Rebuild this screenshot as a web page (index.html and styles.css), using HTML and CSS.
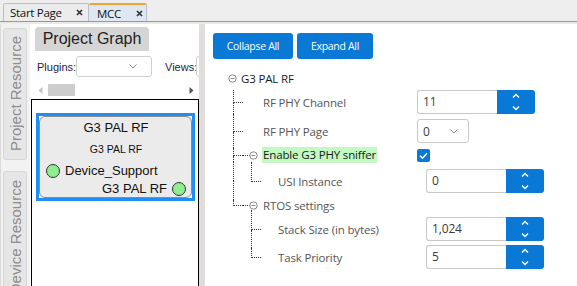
FILE: index.html
```html
<!DOCTYPE html>
<html>
<head>
<meta charset="utf-8">
<link rel="stylesheet" href="styles.css">
</head>
<body>
<div class="app">
  <div class="tabbar">
    <div class="tab start"><span class="tlabel">Start Page</span><svg class="tclose" width="7" height="7" viewBox="0 0 7 7"><path d="M1 1L6 6M6 1L1 6" stroke="#333" stroke-width="1.7"/></svg></div>
    <div class="tab active"><span class="tlabel">MCC</span><svg class="tclose" width="7" height="7" viewBox="0 0 7 7"><path d="M1 1L6 6M6 1L1 6" stroke="#333" stroke-width="1.7"/></svg></div>
  </div>
  <div class="tabline"></div>
  <div class="main">
    <div class="sidetabs">
      <div class="vtab"><span>Project Resource</span></div>
      <div class="vtab"><span>Device Resource</span></div>
    </div>
    <div class="leftpane">
      <div class="pgbtn">Project Graph</div>
      <div class="pluginrow">
        <span class="plabel">Plugins:</span>
        <div class="combo"><svg width="8" height="5" viewBox="0 0 8 5"><path d="M0.5 0.5L4 4L7.5 0.5" fill="none" stroke="#8a8a8a" stroke-width="1"/></svg></div>
        <span class="plabel views">Views:</span>
        <div class="combo"></div>
      </div>
      <div class="hscroll">
        <svg class="arr" width="5" height="7" viewBox="0 0 5 7"><path d="M4.5 0L0.5 3.5L4.5 7Z" fill="#c4c4c4"/></svg>
        <span class="thumb"></span>
        <svg class="arr right" width="5" height="7" viewBox="0 0 5 7"><path d="M0.5 0L4.5 3.5L0.5 7Z" fill="#555"/></svg>
      </div>
      <div class="canvas">
        <div class="node">
          <div class="nodeinner">
            <div class="ntitle">G3 PAL RF</div>
            <div class="nsub">G3 PAL RF</div>
            <div class="nport"><span class="dot"></span><span>Device_Support</span></div>
            <div class="nport out"><span>G3 PAL RF</span><span class="dot"></span></div>
          </div>
        </div>
      </div>
    </div>
    <div class="divider"></div>
    <div class="rightpane">
      <div class="btnrow">
        <div class="btn collapse">Collapse All</div>
        <div class="btn expand">Expand All</div>
      </div>
      <div class="tree">
        <div class="row r-root">
          <svg class="exp" width="9" height="9" viewBox="0 0 9 9"><circle cx="4.5" cy="4.5" r="3.7" fill="none" stroke="#7a7a7a" stroke-width="0.9"/><path d="M2.6 4.5H6.4" stroke="#7a7a7a" stroke-width="0.9"/></svg>
          <span class="rootlabel">G3 PAL RF</span>
        </div>
        <div class="row r-ch">
          <span class="cell tee"><i></i><i></i></span><span class="cell"></span>
          <span class="label">RF PHY Channel</span>
          <div class="ctl">
            <div class="spin"><div class="inp">11</div><div class="sbtn"><svg width="38" height="24" viewBox="0 0 38 24"><path d="M16 7.5L19 4.5L22 7.5M16 16.5L19 19.5L22 16.5" fill="none" stroke="#fff" stroke-width="1.3"/></svg></div></div>
          </div>
        </div>
        <div class="row r-pg">
          <span class="cell tee"><i></i><i></i></span><span class="cell"></span>
          <span class="label">RF PHY Page</span>
          <div class="ctl">
            <div class="select"><span>0</span><svg width="8" height="5" viewBox="0 0 8 5"><path d="M0.5 0.5L4 4L7.5 0.5" fill="none" stroke="#8a8a8a" stroke-width="1"/></svg></div>
          </div>
        </div>
        <div class="row r-en">
          <span class="cell tee"><i></i><i></i></span>
          <svg class="expc" width="18" height="9" viewBox="0 0 18 9"><path d="M0 4.5H1M2 4.5H3M4 4.5H5M6 4.5H6.6" stroke="#333" stroke-width="1"/><circle cx="10.5" cy="4.5" r="3.7" fill="none" stroke="#7a7a7a" stroke-width="0.9"/><path d="M8.6 4.5H12.4" stroke="#7a7a7a" stroke-width="0.9"/></svg>
          <span class="label hl">Enable G3 PHY sniffer</span>
          <div class="ctl">
            <div class="check"><svg width="13" height="13" viewBox="0 0 13 13"><path d="M3 6.8L5.5 9.2L10 4.2" fill="none" stroke="#fff" stroke-width="1.5"/></svg></div>
          </div>
        </div>
        <div class="row r-usi">
          <span class="cell pipe"><i></i><i></i></span><span class="cell elbow"><i></i><i></i></span>
          <span class="label sublabel">USI Instance</span>
          <div class="ctl sub">
            <div class="spin"><div class="inp">0</div><div class="sbtn"><svg width="38" height="24" viewBox="0 0 38 24"><path d="M16 7.5L19 4.5L22 7.5M16 16.5L19 19.5L22 16.5" fill="none" stroke="#fff" stroke-width="1.3"/></svg></div></div>
          </div>
        </div>
        <div class="row r-rtos">
          <span class="cell elbow"><i></i><i></i></span>
          <svg class="expc" width="18" height="9" viewBox="0 0 18 9"><path d="M0 4.5H1M2 4.5H3M4 4.5H5M6 4.5H6.6" stroke="#333" stroke-width="1"/><circle cx="10.5" cy="4.5" r="3.7" fill="none" stroke="#7a7a7a" stroke-width="0.9"/><path d="M8.6 4.5H12.4" stroke="#7a7a7a" stroke-width="0.9"/></svg>
          <span class="label">RTOS settings</span>
        </div>
        <div class="row r-stack">
          <span class="cell"></span><span class="cell tee"><i></i><i></i></span>
          <span class="label sublabel">Stack Size (in bytes)</span>
          <div class="ctl sub">
            <div class="spin"><div class="inp">1,024</div><div class="sbtn"><svg width="38" height="24" viewBox="0 0 38 24"><path d="M16 7.5L19 4.5L22 7.5M16 16.5L19 19.5L22 16.5" fill="none" stroke="#fff" stroke-width="1.3"/></svg></div></div>
          </div>
        </div>
        <div class="row r-task">
          <span class="cell"></span><span class="cell elbow"><i></i><i></i></span>
          <span class="label sublabel">Task Priority</span>
          <div class="ctl sub">
            <div class="spin"><div class="inp">5</div><div class="sbtn"><svg width="38" height="24" viewBox="0 0 38 24"><path d="M16 7.5L19 4.5L22 7.5M16 16.5L19 19.5L22 16.5" fill="none" stroke="#fff" stroke-width="1.3"/></svg></div></div>
          </div>
        </div>
      </div>
    </div>
  </div>
</div>
</body>
</html>
```

FILE: styles.css
```css
* { box-sizing: border-box; margin: 0; padding: 0; }
html, body { width: 577px; height: 286px; overflow: hidden; background: #fff; }
body { font-family: "Open Sans", "Noto Sans", sans-serif; color: #333; }

.app { width: 577px; height: 286px; display: flex; flex-direction: column; }

/* top tab bar */
.tabbar { height: 21px; background: #eeeeee; display: flex; align-items: flex-end; padding-left: 3px; }
.tab { height: 18px; display: flex; align-items: center; justify-content: space-between;
  border: 1px solid #b4c0cc; border-bottom: none; border-radius: 2px 2px 0 0;
  background: #ececec; font-size: 11.5px; color: #111; }
.tab.start { width: 86px; padding: 0 5px 0 6px; }
.tab.active { width: 58px; padding: 0 3px 0 8px; background: #dfe7f3; border-top: 2px solid #f2a431; border-left: none; }
.tlabel { letter-spacing: -0.3px; }
.tabline { height: 3px; border-top: 1px solid #849db4; background: #ebebe5; }

.main { flex: 1; display: flex; min-height: 0; }

/* vertical side tabs */
.sidetabs { width: 30px; flex: none; background: #f2f2f2; border-left: 1px solid #dadada;
  padding: 4px 2px 0 2px; display: flex; flex-direction: column; gap: 11px; overflow: hidden; }
.vtab { flex: none; height: 132px; width: 24px; background: #e6e6e6; border: 1px solid #d6d6d6;
  border-radius: 3px; display: flex; align-items: center; justify-content: center; }
.vtab span { writing-mode: vertical-rl; transform: rotate(180deg); white-space: nowrap;
  font-family: "Liberation Sans", Arial, sans-serif; font-size: 15px; color: #8d8d8d; }

/* left pane */
.leftpane { width: 169px; flex: none; background: #fff; overflow: hidden; display: flex; flex-direction: column;
  font-family: "Liberation Sans", Arial, sans-serif; }
.pgbtn { flex: none; margin: 3px 0 0 5px; width: 114px; height: 24px; background: #d5d5d5;
  border-radius: 4px 4px 0 0; font-size: 16px; color: #222; display: flex; align-items: center; justify-content: center; }
.pluginrow { flex: none; margin-top: 5px; height: 21px; padding-left: 7px; display: flex; align-items: center; white-space: nowrap; }
.plabel { flex: none; font-size: 11px; color: #2a2140; width: 39px; }
.plabel.views { margin-left: 13px; width: 31px; }
.combo { flex: none; width: 76px; height: 21px; border: 1px solid #cfcfcf; border-radius: 3px;
  display: flex; align-items: center; padding-left: 52px; }
.hscroll { flex: none; margin-top: 5px; height: 16px; display: flex; align-items: center; padding-left: 8px; }
.thumb { width: 27px; height: 12px; background: #cdcdcd; margin-left: 5px; }
.arr.right { margin-left: 114px; }
.canvas { flex: 1; margin: 1px 0 0 1px; width: 168px; border: 1px solid #000; border-bottom: none; background: #fff; }
.node { margin: 13px 0 0 4px; width: 159px; height: 88px; border: 3px solid #1f8ff7; }
.nodeinner { height: 100%; background: #ebebeb; border: 1px solid #8a8a8a; border-radius: 6px;
  padding: 2px 5px 0 6px; color: #111; }
.ntitle { font-size: 13px; line-height: 18px; text-align: center; }
.nsub { font-size: 10.5px; line-height: 18px; margin-top: 3px; text-align: center; }
.nport { font-size: 13px; line-height: 18px; display: flex; align-items: center; gap: 5px; }
.nsub + .nport { margin-top: 4px; }
.nport.out { justify-content: flex-end; }
.dot { width: 14px; height: 14px; border-radius: 50%; background: #90ee90; border: 1px solid #333; flex: none; }

.divider { width: 6px; flex: none; background: #e1dddd; }

/* right pane */
.rightpane { flex: 1; background: #fff; padding: 9px 0 0 8px; display: flex; flex-direction: column; overflow: hidden; }
.btnrow { display: flex; gap: 4px; height: 26px; flex: none; }
.btn { height: 26px; background: #0a79d6; color: #fff; border-radius: 3px; font-size: 10.5px; letter-spacing: -0.3px;
  display: flex; align-items: center; justify-content: center; }
.btn.collapse { width: 80px; }
.btn.expand { width: 76px; }
.tree { margin: 7px 0 0 12px; display: flex; flex-direction: column; }
.row { display: flex; align-items: center; flex: none; font-size: 11.5px; letter-spacing: -0.15px; }
.r-root { height: 24px; padding-left: 3px; }
.r-ch { height: 24px; }
.r-pg { height: 34px; }
.r-en { height: 14px; }
.r-usi { height: 38px; }
.r-rtos { height: 10px; }
.r-stack { height: 38px; }
.r-task { height: 18px; }
.exp { flex: none; }
.rootlabel { margin-left: 4px; color: #1a1a1a; }
.expc { flex: none; }
.cell { flex: none; width: 18px; align-self: stretch; display: flex; flex-direction: column; }
.cell i { flex: 1; margin-left: 8px; display: block; }
.cell.tee i:first-child { border-left: 1px dotted #333; border-bottom: 1px dotted #333; }
.cell.tee i:last-child { border-left: 1px dotted #333; }
.cell.pipe i { border-left: 1px dotted #333; }
.cell.elbow i:first-child { border-left: 1px dotted #333; border-bottom: 1px dotted #333; }
.label { flex: 1; margin-left: 2px; color: #555; white-space: nowrap; }
.label.hl { flex: none; margin-left: 1px; padding: 0 1px; background: #c2f8c2; color: #1a1a1a; line-height: 16px; }
.r-en .ctl { margin-left: auto; }
.label.sublabel { margin-left: 17px; }
.ctl { flex: none; width: 160px; display: flex; }
.ctl.sub { width: 151px; }
.spin { display: flex; height: 24px; }
.inp { width: 80px; height: 24px; border: 1px solid #c9c9c9; border-right: none; border-radius: 3px 0 0 3px;
  padding-left: 5px; font-size: 12px; line-height: 22px; color: #3a3a3a; }
.sbtn { width: 38px; height: 24px; background: #0a79d6; border-radius: 0 3px 3px 0; }
.sbtn svg { display: block; }
.select { width: 52px; height: 24px; border: 1px solid #c9c9c9; border-radius: 3px; display: flex; align-items: center;
  padding-left: 5px; font-size: 12px; color: #3a3a3a; }
.select svg { margin-left: 20px; }
.check { width: 13px; height: 13px; background: #0a79d6; border-radius: 2px; }
.check svg { display: block; }
```
